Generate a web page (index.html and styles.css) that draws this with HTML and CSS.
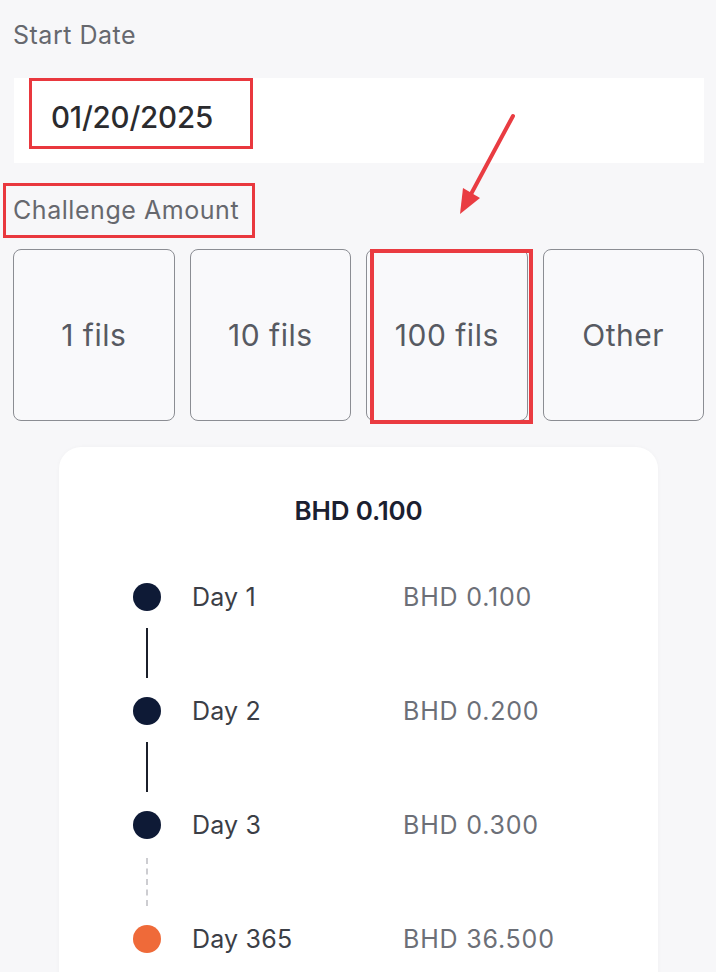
FILE: index.html
```html
<!DOCTYPE html>
<html>
<head>
<meta charset="utf-8">
<link rel="stylesheet" href="styles.css">
</head>
<body>
<div class="page">
  <div class="label start-label">Start Date</div>
  <div class="date-field">
    <span class="annot date-annot">01/20/2025</span>
  </div>
  <div class="amount-label"><span class="annot amount-annot">Challenge Amount</span></div>
  <div class="options">
    <div class="option">1 fils</div>
    <div class="option">10 fils</div>
    <div class="option selected">100 fils<span class="option-annot"></span></div>
    <div class="option">Other</div>
  </div>
  <div class="card">
    <div class="card-title">BHD 0.100</div>
    <div class="timeline">
      <div class="row"><span class="dot"></span><span class="day">Day 1</span><span class="amt">BHD 0.100</span></div>
      <div class="conn"><span class="line"></span></div>
      <div class="row"><span class="dot"></span><span class="day">Day 2</span><span class="amt">BHD 0.200</span></div>
      <div class="conn"><span class="line"></span></div>
      <div class="row"><span class="dot"></span><span class="day">Day 3</span><span class="amt">BHD 0.300</span></div>
      <div class="conn"><span class="line dashed"></span></div>
      <div class="row"><span class="dot orange"></span><span class="day">Day 365</span><span class="amt">BHD 36.500</span></div>
    </div>
  </div>
  <svg class="arrow" width="80" height="120" viewBox="0 0 80 120">
    <line x1="63" y1="6" x2="20" y2="86" stroke="#e93c42" stroke-width="4" stroke-linecap="round"/>
    <polygon points="10,104 13,78 30,88" fill="#e93c42"/>
  </svg>
</div>
</body>
</html>
```
FILE: styles.css
```css
* { box-sizing: border-box; }
html, body { margin: 0; padding: 0; }
body {
  background: #f7f7f9;
  font-family: Inter, "Noto Sans", "Liberation Sans", sans-serif;
  width: 716px;
  height: 972px;
  overflow: hidden;
}
.page {
  position: relative;
  padding: 19px 12px 0 13px;
}
.label {
  font-size: 25px;
  color: #66686e;
  line-height: 32px;
  letter-spacing: 0.5px;
}
.date-field {
  margin-top: 27px;
  margin-left: 1px;
  background: #ffffff;
  height: 85px;
  padding-left: 15px;
}
.annot {
  border: 3px solid #e9383e;
  display: inline-flex;
  align-items: center;
}
.date-annot {
  width: 224px;
  height: 71px;
  padding: 7px 0 0 19px;
  font-size: 29.5px;
  font-weight: 500;
  color: #2b2b2e;
  letter-spacing: -0.2px;
}
.amount-label {
  margin-top: 20px;
  margin-left: -10px;
}
.amount-annot {
  height: 55px;
  width: 252px;
  padding: 0 0 2px 7px;
  font-size: 25px;
  color: #66686e;
  letter-spacing: 0.55px;
}
.options {
  margin-top: 11px;
  display: grid;
  grid-template-columns: repeat(4, 1fr);
  gap: 15px;
}
.option {
  position: relative;
  height: 172px;
  border: 1.5px solid #8b8d93;
  border-radius: 8px;
  display: flex;
  align-items: center;
  justify-content: center;
  font-size: 30px;
  color: #575a62;
  background: #f9f9fb;
  letter-spacing: 0.5px;
}
.option-annot {
  position: absolute;
  left: 3px;
  top: -1px;
  right: -6px;
  bottom: -4px;
  border: 4px solid #ea3b41;
}
.card {
  margin: 26px auto 0;
  width: 599px;
  height: 560px;
  background: #ffffff;
  border-radius: 22px;
  padding-top: 52px;
  box-shadow: 0 0 4px rgba(0,0,0,0.03);
}
.card-title {
  text-align: center;
  font-size: 26px;
  font-weight: 600;
  line-height: 24px;
  color: #1b2030;
  letter-spacing: -0.2px;
}
.timeline {
  margin-top: 60px;
  padding-left: 74px;
}
.row {
  display: flex;
  align-items: center;
  height: 28px;
}
.dot {
  width: 28px;
  height: 28px;
  border-radius: 50%;
  background: #0e1a36;
  flex: none;
}
.dot.orange { background: #ef6a39; }
.day {
  margin-left: 31px;
  width: 211px;
  font-size: 25px;
  color: #3b3e46;
  letter-spacing: 0.2px;
}
.amt {
  font-size: 25px;
  color: #6c6f77;
  letter-spacing: 0.8px;
}
.conn {
  height: 86px;
  padding-left: 13px;
  padding-top: 17px;
}
.line {
  display: block;
  width: 2px;
  height: 50px;
  background: #1b1f2a;
}
.line.dashed {
  background: none;
  border-left: 2px dashed #cdcdd1;
  height: 48px;
  margin-top: 2px;
}
.arrow {
  position: absolute;
  left: 450px;
  top: 110px;
}
```
